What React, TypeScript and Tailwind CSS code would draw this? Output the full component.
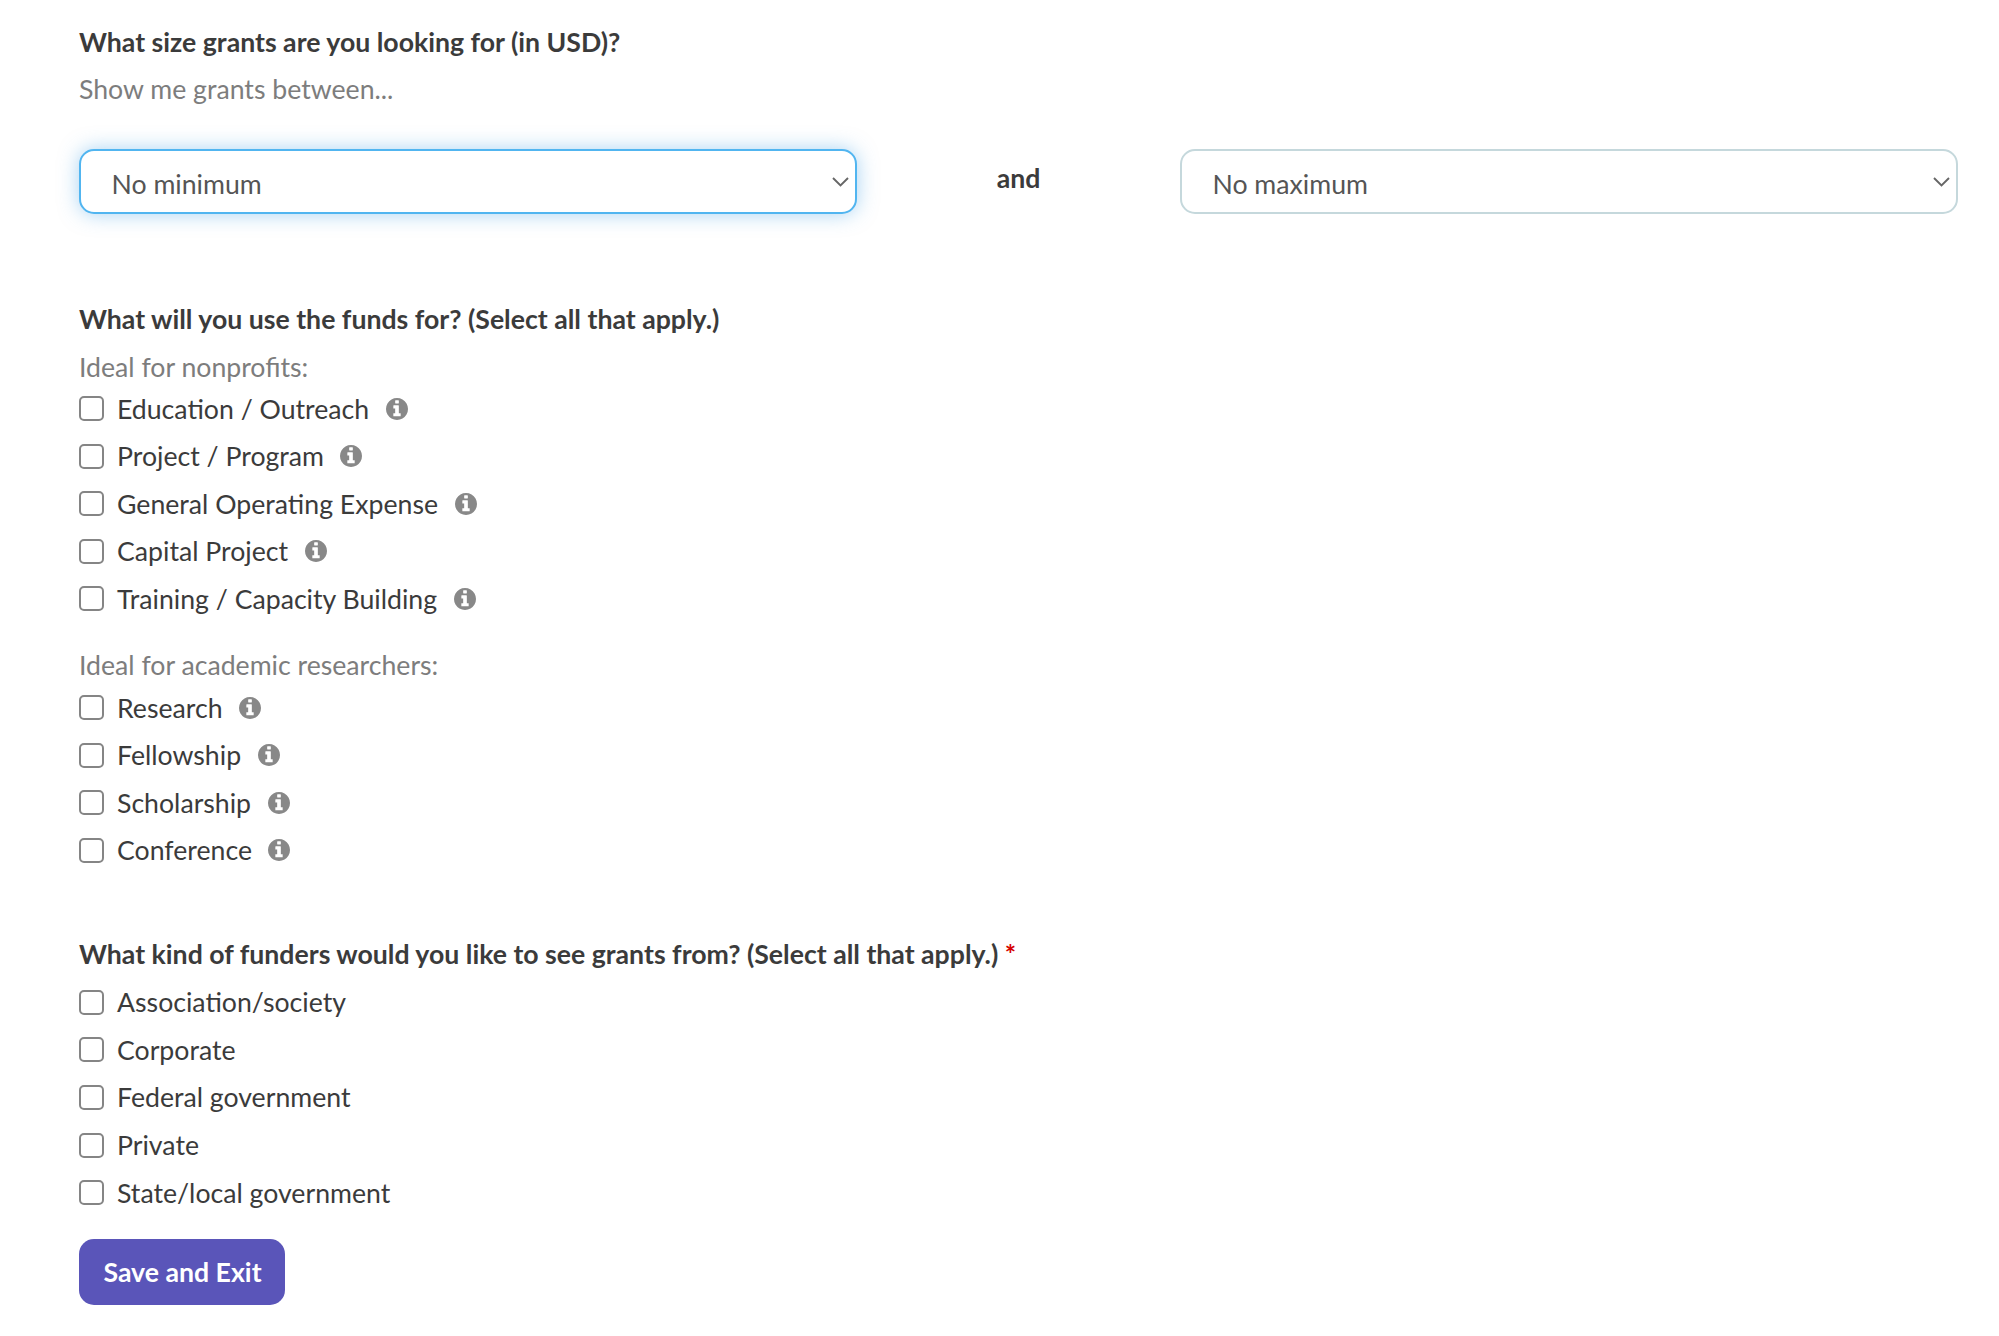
import { useState } from "react";

type SelectProps = {
  label: string;
  isFocused?: boolean;
};

type CheckboxGroupProps = {
  options: string[];
  hasInfo?: boolean;
};

const nonprofitUses = [
  "Education / Outreach",
  "Project / Program",
  "General Operating Expense",
  "Capital Project",
  "Training / Capacity Building",
];

const academicUses = ["Research", "Fellowship", "Scholarship", "Conference"];

const funders = [
  "Association/society",
  "Corporate",
  "Federal government",
  "Private",
  "State/local government",
];

function InfoIcon() {
  return (
    <svg
      viewBox="128 128 1536 1536"
      fill="currentColor"
      className="ml-[16.5px] size-[22px] text-[#888]"
    >
      <path d="M1152 1376v-160q0-14-9-23t-23-9h-96v-512q0-14-9-23t-23-9h-320q-14 0-23 9t-9 23v160q0 14 9 23t23 9h96v320h-96q-14 0-23 9t-9 23v160q0 14 9 23t23 9h448q14 0 23-9t9-23zM1024 480v-160q0-14-9-23t-23-9h-192q-14 0-23 9t-9 23v160q0 14 9 23t23 9h192q14 0 23-9t9-23zM1664 896q0 209-103 385.5t-279.5 279.5-385.5 103-385.5-103-279.5-279.5-103-385.5 103-385.5 279.5-279.5 385.5-103 385.5 103 279.5 279.5 103 385.5z" />
    </svg>
  );
}

function SelectBox({ label, isFocused = false }: SelectProps) {
  const border = isFocused
    ? "border-[#51b5f0] shadow-[0_0_20px_rgba(81,167,232,0.5)]"
    : "border-[#c5d8dc]";

  return (
    <button
      type="button"
      className={`${border} flex h-[65px] w-[778px] items-center justify-between rounded-[15px] border-2 bg-white pr-[6px] pl-[30.5px] text-[#555]`}
    >
      <span className="pt-[6px]">{label}</span>
      <svg width="17" height="10" viewBox="0 0 17 10" fill="none">
        <path d="M1 1L8.5 8.5L16 1" stroke="#666" strokeWidth="1.9" />
      </svg>
    </button>
  );
}

function CheckboxGroup({ options, hasInfo = false }: CheckboxGroupProps) {
  const [checked, setChecked] = useState<string[]>([]);

  const toggle = (option: string) => {
    setChecked(
      checked.includes(option)
        ? checked.filter((item) => item !== option)
        : [...checked, option]
    );
  };

  return (
    <div>
      {options.map((option) => (
        <label key={option} className="flex h-[47.6px] items-center">
          <input
            type="checkbox"
            checked={checked.includes(option)}
            onChange={() => toggle(option)}
            className="size-[25px] appearance-none rounded-[5px] border-2 border-[#858585] bg-white checked:bg-[#5a55b9]"
          />
          <span className="ml-[13px] pt-[1.5px]">{option}</span>
          {hasInfo && <InfoIcon />}
        </label>
      ))}
    </div>
  );
}

function App() {
  return (
    <form
      className="min-h-[1336px] w-full bg-white pt-[18.5px] pr-[41px] pl-[79px] font-['Lato',sans-serif] text-[26.67px] leading-[47.6px] text-[#3b3b3b]"
      onSubmit={(e) => e.preventDefault()}
    >
      <section className="h-[277.6px]">
        <h2 className="font-bold">What size grants are you looking for (in USD)?</h2>
        <p className="text-[#7d7d7d]">Show me grants between...</p>
        <div className="mt-[35.5px] flex items-start justify-between">
          <SelectBox label="No minimum" isFocused />
          <span className="pt-[6px] font-bold">and</span>
          <SelectBox label="No maximum" />
        </div>
      </section>

      <section className="h-[635.4px]">
        <h2 className="font-bold">What will you use the funds for? (Select all that apply.)</h2>
        <p className="-mb-[6.5px] text-[#7d7d7d]">Ideal for nonprofits:</p>
        <CheckboxGroup options={nonprofitUses} hasInfo />
        <p className="mt-[19.5px] -mb-[6px] text-[#7d7d7d]">Ideal for academic researchers:</p>
        <CheckboxGroup options={academicUses} hasInfo />
      </section>

      <section>
        <h2 className="font-bold">
          What kind of funders would you like to see grants from? (Select all that apply.){" "}
          <span className="text-[#d60000]">*</span>
        </h2>
        <div className="-mt-[0.6px]">
          <CheckboxGroup options={funders} />
        </div>
      </section>

      <button className="mt-[22.6px] h-[66px] w-[206px] rounded-[15px] bg-[#5a55b9] pt-[2px] pl-[1px] font-bold text-white">
        Save and Exit
      </button>
    </form>
  );
}

export default App;
